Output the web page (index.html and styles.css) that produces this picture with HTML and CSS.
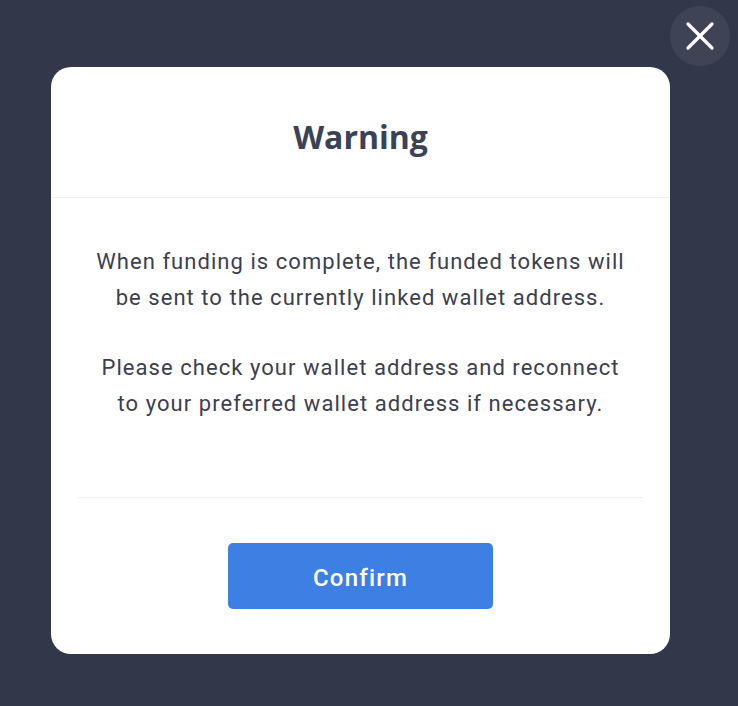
FILE: index.html
```html
<!DOCTYPE html>
<html>
<head>
<meta charset="utf-8">
<link rel="stylesheet" href="styles.css">
</head>
<body>
<button class="close" aria-label="Close">
  <svg width="30" height="30" viewBox="0 0 30 30"><path d="M3 3 L27 27 M27 3 L3 27" stroke="#fff" stroke-width="3.2" stroke-linecap="round"/></svg>
</button>
<div class="modal">
  <div class="modal-header">Warning</div>
  <div class="modal-body">
    <p>When funding is complete, the funded tokens will<br>be sent to the currently linked wallet address.</p>
    <p>Please check your wallet address and reconnect<br>to your preferred wallet address if necessary.</p>
  </div>
  <div class="modal-footer">
    <button class="confirm">Confirm</button>
  </div>
</div>
</body>
</html>
```
FILE: styles.css
```css
html, body {
  margin: 0;
  height: 100%;
}
body {
  background: #323849;
  font-family: Roboto, "Liberation Sans", sans-serif;
  position: relative;
  overflow: hidden;
  padding: 67px 0 0 51px;
  box-sizing: border-box;
}
.close {
  position: absolute;
  left: 670px;
  top: 6px;
  width: 60px;
  height: 60px;
  border-radius: 50%;
  border: none;
  background: #3e4456;
  display: flex;
  align-items: center;
  justify-content: center;
  padding: 0;
}
.modal {
  width: 619px;
  height: 587px;
  background: #fff;
  border-radius: 20px;
  display: flex;
  flex-direction: column;
}
.modal-header {
  height: 131px;
  border-bottom: 1px solid #efefef;
  display: flex;
  align-items: center;
  justify-content: center;
  font-family: "Open Sans", sans-serif;
  font-weight: 700;
  font-size: 32px;
  color: #3a4256;
  padding-top: 8px;
  box-sizing: border-box;
}
.modal-body {
  margin: 0 27px;
  padding: 46px 0 75px;
  border-bottom: 1px solid #efefef;
  text-align: center;
  font-size: 22px;
  line-height: 36px;
  color: #3b404e;
  letter-spacing: 1.05px;
}
.modal-body p {
  margin: 0;
}
.modal-body p + p {
  margin-top: 34px;
}
.modal-footer {
  display: flex;
  justify-content: center;
  padding-top: 45px;
}
.confirm {
  width: 265px;
  height: 66px;
  border: none;
  border-radius: 5px;
  background: #3d7fe3;
  color: #fff;
  font-family: Roboto, sans-serif;
  font-weight: 500;
  font-size: 24px;
  letter-spacing: 1.2px;
  padding-top: 4px;
}
```
